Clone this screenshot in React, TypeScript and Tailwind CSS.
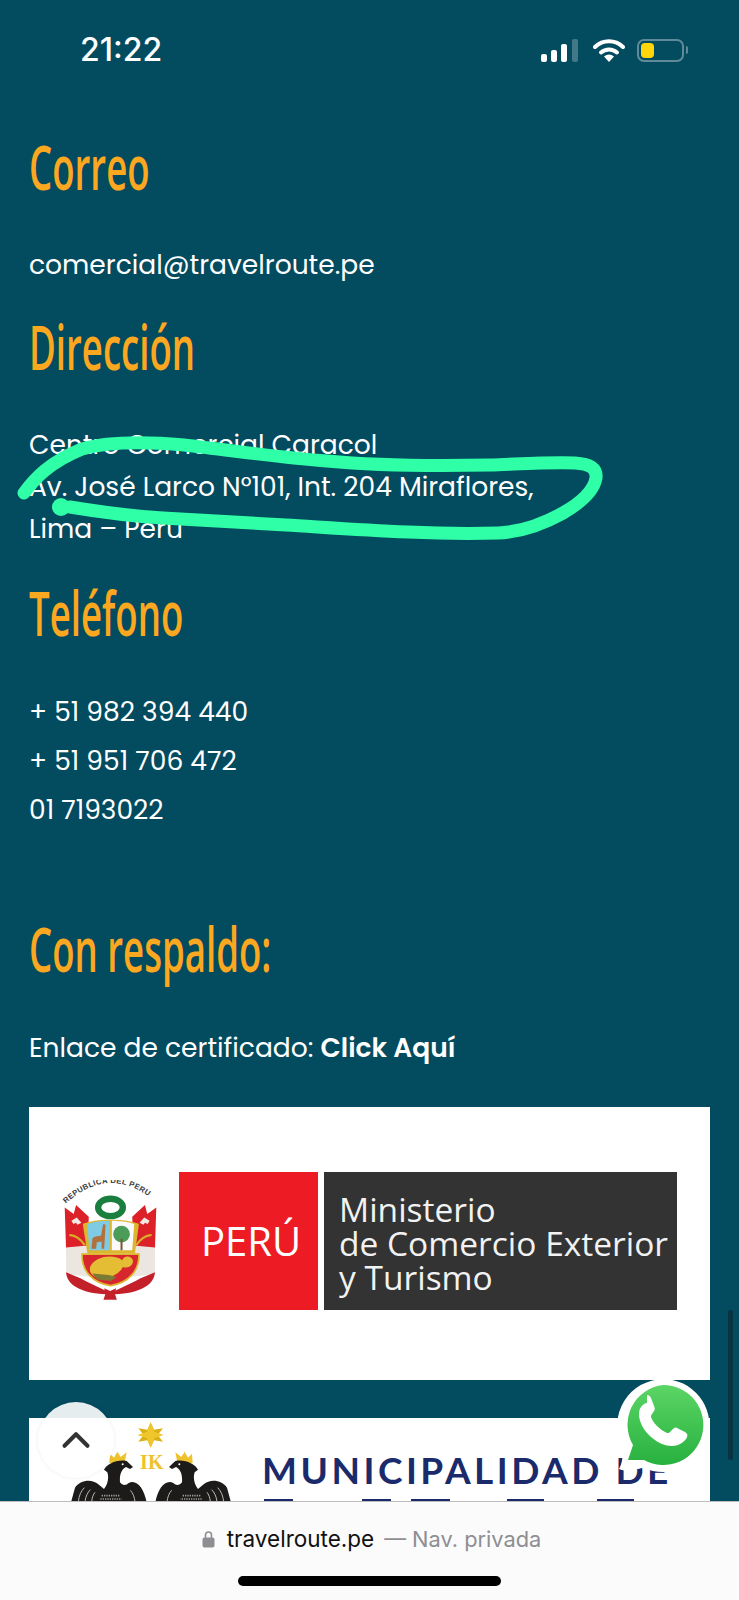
import { ChevronUp } from 'lucide-react'

const body = "font-['Poppins','Inter',sans-serif]"

function Heading({ children, className }: { children: string; className: string }) {
    return (
        <h2 className={`font-['Open_Sans',sans-serif] text-[61px] leading-[72px] font-semibold text-[#fca720] origin-left scale-x-[0.6] whitespace-nowrap ${className}`}>
            {children}
        </h2>
    )
}

function StatusIcons() {
    return (
        <div className="flex items-center gap-[12px]">
            <div className="flex items-center gap-[15px]">
                <svg width="37" height="23" viewBox="0 0 37 23">
                    <rect x="0" y="15" width="6" height="8" rx="2" fill="#fff" />
                    <rect x="10" y="11" width="6" height="12" rx="2" fill="#fff" />
                    <rect x="20" y="5" width="6" height="18" rx="2" fill="#fff" />
                    <rect x="31" y="0" width="6" height="23" rx="2" fill="#ffffff" fillOpacity="0.25" />
                </svg>
                <svg width="32" height="24" viewBox="0 0 32 24">
                    <path d="M2 9a20 20 0 0 1 28 0" fill="none" stroke="#fff" strokeWidth="4" strokeLinecap="round" />
                    <path d="M8 14.5a12 12 0 0 1 16 0" fill="none" stroke="#fff" strokeWidth="4" strokeLinecap="round" />
                    <path d="M11 18.5a8 8 0 0 1 10 0L16 24z" fill="#fff" />
                </svg>
            </div>
            <div className="flex items-center gap-[2px]">
                <div className="w-[47px] h-[23px] rounded-[7px] border-2 border-[#5f8a99] p-[2px]">
                    <div className="w-[13px] h-full rounded-[4px] bg-[#ffd60a]" />
                </div>
                <div className="w-[2px] h-[8px] rounded-r bg-[#5f8a99]" />
            </div>
        </div>
    )
}

function Emblem() {
    return (
        <svg width="97" height="122" viewBox="100 60 290 365" className="shrink-0">
            <defs>
                <path id="emblem-arc" d="M110 132Q245 6 388 132" />
            </defs>
            <text fontSize="23" fontFamily="Liberation Sans" fontWeight="700" fill="#3a3a3a" letterSpacing="1">
                <textPath href="#emblem-arc" startOffset="2">REPUBLICA DEL PERU</textPath>
            </text>
            {/* flags */}
            <path d="M108 142L135 162L142 135L180 170L176 262L112 266Z" fill="#dd2129" />
            <path d="M382 142L355 162L348 135L310 170L314 262L378 266Z" fill="#dd2129" />
            <path d="M128 182l16-10 14 16-12 6-4-6-8 4zM362 182l-16-10-14 16 12 6 4-6 8 4z" fill="#f3e9e4" />
            <path d="M112 262L176 256L190 350L112 342Z" fill="#ece6e1" />
            <path d="M378 262L314 256L300 350L378 342Z" fill="#ece6e1" />
            <path d="M112 336C130 345 150 350 170 362L245 398L320 362C340 350 360 345 378 336C375 380 320 402 245 402C170 402 115 380 112 336Z" fill="#c3202a" />
            <path d="M122 225c16-2 36 14 46 30M368 225c-16-2-36 14-46 30" fill="none" stroke="#d9ab2a" strokeWidth="7" />
            {/* wreath */}
            <ellipse cx="245" cy="142" rx="37" ry="26" fill="none" stroke="#1a7f3e" strokeWidth="19" />
            {/* shield */}
            <path d="M162 192C195 175 295 175 330 192L318 280H176Z" fill="#dcb62f" />
            <path d="M175 192C195 184 225 182 242 182V270H182Z" fill="#7fcbe3" />
            <path d="M249 182C270 182 298 185 316 192L310 270H249Z" fill="#fafafa" />
            <path d="M188 266l3-32c6-6 18-6 26-8l6-34 7 2-2 40-2 32h-7l-1-22-14 2-2 20h-8z" fill="#b1703c" />
            <circle cx="278" cy="222" r="25" fill="#4b9c58" />
            <rect x="275" y="236" width="6" height="34" fill="#7a5530" />
            <path d="M160 282H330C332 330 300 368 245 376C190 368 158 330 160 282Z" fill="#d8262e" stroke="#dcb62f" strokeWidth="5" />
            <path d="M184 320C200 285 258 282 280 300C284 286 306 284 312 300C314 318 296 326 282 320C268 350 215 365 192 345C184 338 182 330 184 320Z" fill="#e5bd35" />
            <path d="M190 340l50 4 24 6-18 12-40-4z" fill="#7c7b35" />
            {/* ribbon */}
            <path d="M226 384l18 8 18-8-4 16 6 18h-40l6-18z" fill="#c3202a" />
        </svg>
    )
}

function Eagle() {
    return (
        <>
            <path d="M238 205L240 176L252 188L262 170L272 186L290 172L284 202Z" fill="#eec22c" />
            <path d="M123 322L135 278C150 255 185 250 205 268L222 282C232 270 238 250 232 232L222 224C232 206 262 192 290 198L309 216L300 222L288 216C276 222 268 236 270 262C278 272 288 272 296 264C320 252 342 280 350 322Z" fill="#1d1b1a" />
            <path d="M145 320c2-18 8-32 18-42M165 320c2-16 8-28 16-36M185 320c1-12 5-22 10-28M315 320c-2-14-6-26-14-34" fill="none" stroke="#d8d8d2" strokeWidth="2.5" />
            <path d="M215 302h56M211 312h64" fill="none" stroke="#9c9c94" strokeWidth="5" strokeDasharray="4 3" />
            <circle cx="278" cy="208" r="3" fill="#fff" />
        </>
    )
}

function Eagles() {
    return (
        <svg width="160" height="84" viewBox="123 69 480 252" className="absolute left-[42px] top-0">
            <path d="M362 82l10 22 27-4-16 20 16 20-27-4-10 22-10-22-27 4 16-20-16-20 27 4z" fill="#dcb012" />
            <path d="M322 120l28-9 12-28 12 28 27 9-27 9-12 28-12-28z" fill="#efc62c" />
            <text x="330" y="222" fontSize="60" fontFamily="Liberation Serif" fontWeight="700" fill="#eec22c" letterSpacing="1">IK</text>
            <Eagle />
            <g transform="matrix(-1 0 0 1 726 0)">
                <Eagle />
            </g>
        </svg>
    )
}

export default function App() {
    return (
        <div className="relative w-[739px] h-[1600px] overflow-hidden bg-[#034b5f] text-white">
            {/* status bar */}
            <div className="flex items-center justify-between pl-[80px] pr-[51px] pt-[32px] h-[68px]">
                <span className="font-['Inter',sans-serif] text-[32px] leading-[36px] font-medium">21:22</span>
                <StatusIcons />
            </div>

            <div className={`${body} px-[29px] text-[26.5px]`}>
                <Heading className="mt-[63px]">Correo</Heading>
                <p className="mt-[41px] leading-[42px]">comercial@travelroute.pe</p>

                <Heading className="mt-[25px]">Dirección</Heading>
                <p className="mt-[41px] leading-[42px]">
                    Centro Comercial Caracol
                    <br />
                    Av. José Larco N°101, Int. 204 Miraflores,
                    <br />
                    Lima – Perú
                </p>

                <Heading className="mt-[27px]">Teléfono</Heading>
                <div className="mt-[38px] leading-[49px]">
                    <p>+ 51 982 394 440</p>
                    <p>+ 51 951 706 472</p>
                    <p>01 7193022</p>
                </div>

                <Heading className="mt-[79px]">Con respaldo:</Heading>
                <p className="mt-[42px] leading-[42px]">
                    Enlace de certificado: <strong className="font-semibold">Click Aquí</strong>
                </p>

                <div className="mt-[38px] h-[273px] bg-white flex items-center pl-[33px] pb-[6px] gap-[20px]">
                    <Emblem />
                    <div className="flex h-[138px] gap-[6px]">
                        <div className="w-[139px] pl-[5px] bg-[#ed1c24] flex items-center justify-center font-['Open_Sans',sans-serif] text-[40px]">
                            PERÚ
                        </div>
                        <div className="w-[353px] bg-[#333333] pl-[15px] pt-[20px] font-['Open_Sans',sans-serif] text-[33.5px] leading-[34px] whitespace-nowrap text-[#f2f2f2]">
                            Ministerio
                            <br />
                            de Comercio Exterior
                            <br />
                            y Turismo
                        </div>
                    </div>
                </div>

                <div className="relative mt-[38px] h-[120px] bg-white overflow-hidden">
                    <Eagles />
                    <p className="absolute left-[233px] top-[30px] font-['Lato',sans-serif] text-[37px] leading-[44px] font-bold tracking-[3.5px] text-[#1b2a6b] whitespace-nowrap">
                        MUNICIPALIDAD DE
                    </p>
                    <div className="absolute left-[235px] top-[81px] flex">
                        <div className="w-[29px] h-[3px] bg-[#1b2a6b]" />
                        <div className="ml-[69px] w-[29px] h-[3px] bg-[#1b2a6b]" />
                        <div className="ml-[20px] w-[39px] h-[3px] bg-[#1b2a6b]" />
                        <div className="ml-[57px] w-[37px] h-[3px] bg-[#1b2a6b]" />
                        <div className="ml-[53px] w-[37px] h-[3px] bg-[#1b2a6b]" />
                    </div>
                </div>
            </div>

            {/* hand-drawn marker */}
            <svg className="absolute left-0 top-0 pointer-events-none" width="739" height="1600" viewBox="0 0 739 1600">
                <path
                    d="M24 493C35 478 50 462 82 449C110 441 150 442 184 445C230 450 280 458 327 461C380 466 440 466 490 465C520 464 550 462 575 463C590 464 597 468 596 478C594 490 582 502 563 513C545 523 522 532 498 533C460 534 430 533 408 532C360 530 320 527 286 525C240 522 200 520 163 518C130 516 100 512 70 507"
                    fill="none"
                    stroke="#2fffa6"
                    strokeWidth="13"
                    strokeLinecap="round"
                    strokeLinejoin="round"
                />
                <circle cx="61" cy="507" r="9" fill="#2fffa6" />
            </svg>

            {/* scroll indicator */}
            <div className="absolute left-[728px] top-[1310px] w-[5px] h-[150px] rounded-full bg-[#0a3341]" />

            {/* back to top */}
            <button className="absolute left-[38px] top-[1402px] w-[76px] h-[76px] rounded-full bg-white/90 shadow-[0_0_4px_rgba(0,0,0,0.08)] flex items-center justify-center text-[#333]">
                <ChevronUp size={46} strokeWidth={2.1} />
            </button>

            {/* whatsapp */}
            <svg className="absolute left-[616px] top-[1378px]" width="95" height="96" viewBox="0 0 95 96">
                <path d="M47 1a46.5 46.5 0 1 1-20 88.5C20 92 10 94 3 91 7 84 7 76 6 68A46.5 46.5 0 0 1 47 1z" fill="#fff" />
                <defs>
                    <linearGradient id="wa-green" x1="0" y1="0" x2="0" y2="1">
                        <stop offset="0" stopColor="#5bd566" />
                        <stop offset="1" stopColor="#28b13f" />
                    </linearGradient>
                </defs>
                <path d="M47 7a40 40 0 1 1-19 75L12 82l5-15A40 40 0 0 1 47 7z" fill="url(#wa-green)" />
                <path
                    d="M31 25c-3 0-8 4-8 11 0 8 5 17 12 23 7 6 14 9 21 9 7 0 14-5 15-9 1-2 0-4-2-5l-8-4c-2-1-3 0-5 2l-2 2c-1 1-2 1-3 1-4-2-7-4-10-7-3-3-5-6-6-9 0-1 0-2 1-3l2-3c1-1 1-3 0-5l-3-8c-1-2-2-3-4-3z"
                    fill="#fff"
                />
            </svg>

            {/* browser bar */}
            <div className="absolute left-0 bottom-0 w-full h-[99px] bg-[#fbfbfb] border-t border-[#bdbdbd] font-['Inter',sans-serif]">
                <div className="flex items-center justify-center h-[74px] pl-[4px] text-[22.5px]">
                    <svg width="13" height="18" viewBox="0 0 13 18" className="mr-[12px]">
                        <path d="M3.5 8V5a3 3 0 0 1 6 0v3" fill="none" stroke="#8e8e93" strokeWidth="1.6" />
                        <rect x="0.5" y="7.5" width="12" height="10" rx="2" fill="#8e8e93" />
                    </svg>
                    <span className="text-[#111]">travelroute.pe</span>
                    <span className="ml-[10px] text-[21.8px] text-[#8e8e93]">— Nav. privada</span>
                </div>
                <div className="ml-[238px] w-[263px] h-[10px] rounded-full bg-black" />
            </div>
        </div>
    )
}
